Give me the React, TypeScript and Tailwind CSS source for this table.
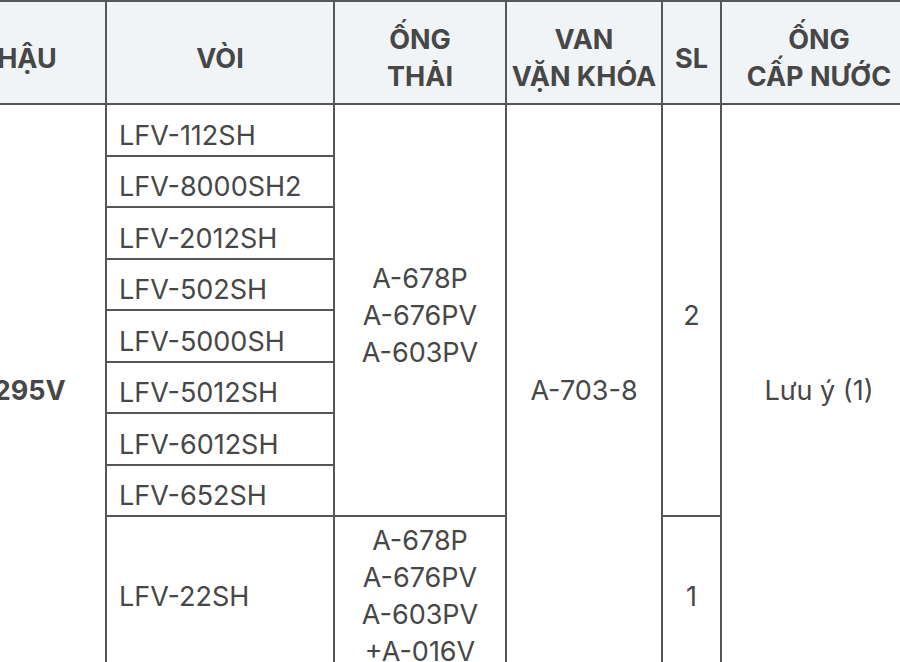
import React from "react";

const head = "bg-[#f1f4f6] font-bold flex items-center justify-center text-center pt-[11px]";
const cell = "bg-white flex items-center justify-center text-center pt-[11px]";
const voi = "bg-white flex items-center justify-start pl-[12px] pt-[11px]";

const voiRows = [
  "LFV-112SH",
  "LFV-8000SH2",
  "LFV-2012SH",
  "LFV-502SH",
  "LFV-5000SH",
  "LFV-5012SH",
  "LFV-6012SH",
  "LFV-652SH",
];

const rowStart = [
  "row-start-2",
  "row-start-3",
  "row-start-4",
  "row-start-5",
  "row-start-6",
  "row-start-7",
  "row-start-8",
  "row-start-9",
];

export default function App() {
  return (
    <div className="w-[900px] h-[662px] overflow-hidden bg-white font-['Inter','Noto_Sans',sans-serif] text-[#474747] text-[27px] leading-[37px]">
      <div className="-ml-[73px] w-max grid grid-cols-[176px_226px_170px_154px_57px_194px] grid-rows-[101px_repeat(8,49.5px)_147px] gap-[2px] p-[2px] bg-[#565656]">
        <div className={`${head} col-start-1 row-start-1`}>CHẬU</div>
        <div className={`${head} col-start-2 row-start-1`}>VÒI</div>
        <div className={`${head} col-start-3 row-start-1`}>
          ỐNG
          <br />
          THẢI
        </div>
        <div className={`${head} col-start-4 row-start-1`}>
          VAN
          <br />
          VẶN KHÓA
        </div>
        <div className={`${head} col-start-5 row-start-1`}>SL</div>
        <div className={`${head} col-start-6 row-start-1`}>
          ỐNG
          <br />
          CẤP NƯỚC
        </div>

        <div className={`${cell} col-start-1 row-start-2 row-span-9 font-bold`}>L-295V</div>

        {voiRows.map((v, i) => (
          <div key={v} className={`${voi} col-start-2 ${rowStart[i]}`}>
            {v}
          </div>
        ))}
        <div className={`${voi} col-start-2 row-start-10`}>LFV-22SH</div>

        <div className={`${cell} col-start-3 row-start-2 row-span-8`}>
          A-678P
          <br />
          A-676PV
          <br />
          A-603PV
        </div>
        <div className={`${cell} col-start-3 row-start-10`}>
          A-678P
          <br />
          A-676PV
          <br />
          A-603PV
          <br />
          +A-016V
        </div>

        <div className={`${cell} col-start-4 row-start-2 row-span-9`}>A-703-8</div>

        <div className={`${cell} col-start-5 row-start-2 row-span-8`}>2</div>
        <div className={`${cell} col-start-5 row-start-10`}>1</div>

        <div className={`${cell} col-start-6 row-start-2 row-span-9`}>Lưu ý (1)</div>
      </div>
    </div>
  );
}
